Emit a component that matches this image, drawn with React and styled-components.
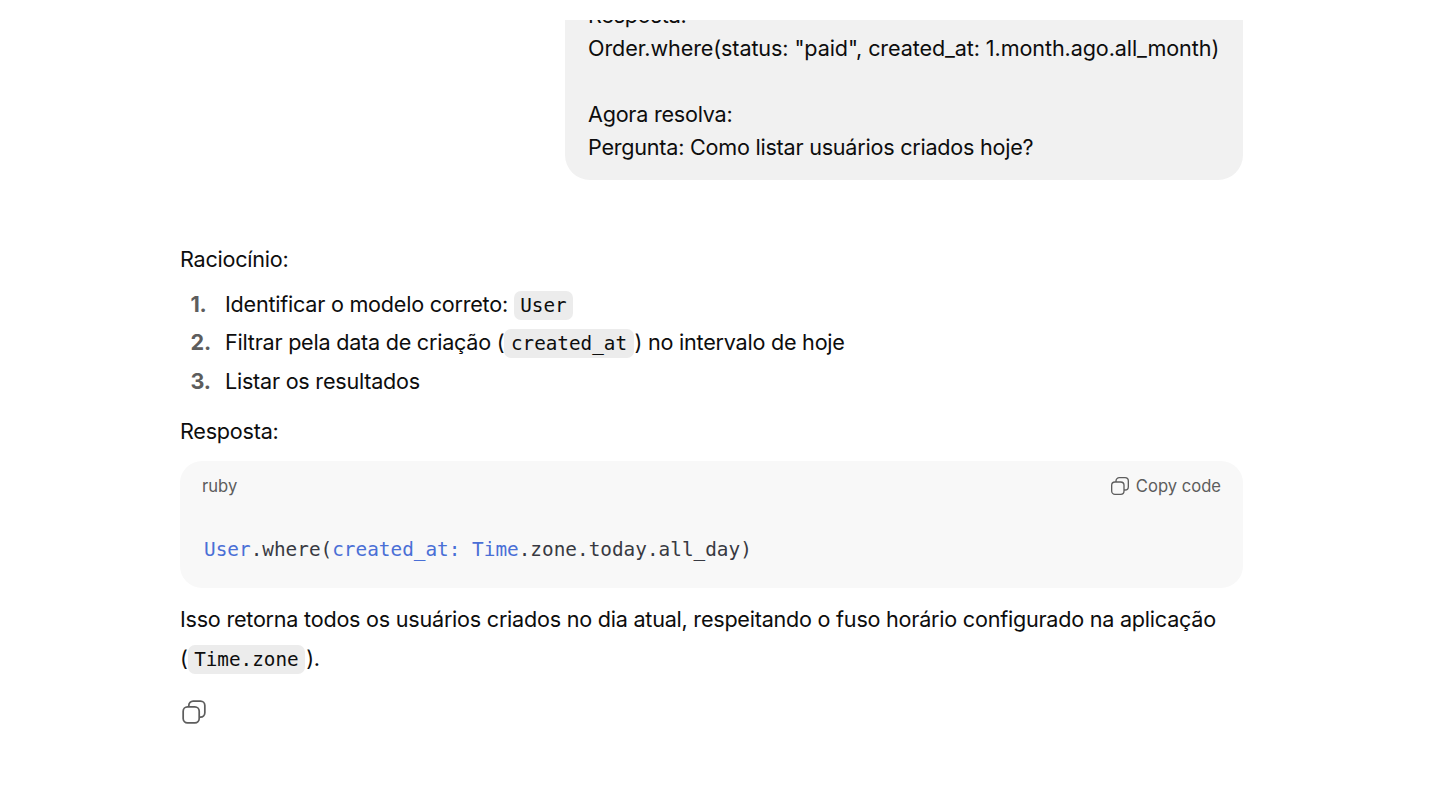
import React from 'react';
import styled, { createGlobalStyle } from 'styled-components';

const GlobalStyle = createGlobalStyle`
  html, body {
    margin: 0;
    padding: 0;
    background: #fff;
  }
  * {
    box-sizing: border-box;
  }
`;

const Page = styled.div`
  width: 1440px;
  height: 810px;
  overflow: hidden;
  display: flex;
  flex-direction: column;
  padding-top: 20px;
  font-family: Inter, 'Liberation Sans', sans-serif;
  font-size: 21.6px;
  letter-spacing: -0.24px;
  color: #0d0d0d;
`;

// chat is pinned to the bottom, older content is cut off under the top edge
const Thread = styled.main`
  flex: 1;
  min-height: 0;
  overflow: hidden;
  display: flex;
  flex-direction: column;
  justify-content: flex-end;
  width: 1063px;
  margin-left: 180px;
  padding-bottom: 85px;
`;

const UserBubble = styled.div`
  flex-shrink: 0;
  align-self: flex-end;
  width: 678px;
  padding: 0 23px 16px;
  margin-bottom: 63px;
  background: #f1f1f1;
  border-radius: 0 0 25px 25px;
  line-height: 33px;
  white-space: pre-line;
`;

const WideLine = styled.span`
  letter-spacing: -0.11px;
`;

const Text = styled.p`
  flex-shrink: 0;
  margin: 0 0 ${(p) => p.$after || 0}px;
  line-height: ${(p) => p.$lineHeight || 33}px;
`;

const Steps = styled.ol`
  flex-shrink: 0;
  list-style: none;
  counter-reset: step;
  margin: 0 0 15px;
  padding: 0;
`;

const Step = styled.li`
  counter-increment: step;
  display: flex;
  align-items: baseline;
  height: 38.5px;
  line-height: 38.5px;
  padding-left: 10.5px;

  &::before {
    content: counter(step) '.';
    width: 34.5px;
    flex-shrink: 0;
    font-weight: 700;
    color: #5d5d5d;
  }
`;

const StepText = styled.span`
  white-space: pre;
`;

const Chip = styled.code`
  display: inline-block;
  height: 29px;
  line-height: 29px;
  padding: 0 6.5px;
  margin: 0 1px 0 0;
  border-radius: 7px;
  background: #ececec;
  font-family: 'DejaVu Sans Mono', monospace;
  font-size: 19.3px;
  letter-spacing: 0;
  vertical-align: baseline;
`;

const CodeBlock = styled.section`
  flex-shrink: 0;
  height: 127px;
  margin-bottom: 12px;
  border-radius: 22px;
  background: #f8f8f8;
`;

const CodeHeader = styled.div`
  display: flex;
  align-items: center;
  justify-content: space-between;
  height: 50px;
  padding: 0 22px;
  font-size: 16.6px;
  letter-spacing: 0;
  color: #5d5d5d;
`;

const CopyButton = styled.button`
  display: flex;
  align-items: center;
  gap: 6px;
  padding: 0;
  border: 0;
  background: none;
  font: inherit;
  color: inherit;
`;

const CodeLine = styled.pre`
  margin: 0;
  padding: 25px 24px 0;
  line-height: 28px;
  font-family: 'DejaVu Sans Mono', monospace;
  font-size: 19.37px;
  letter-spacing: 0;
  color: #383a42;
`;

const Blue = styled.span`
  color: #4a6fd6;
`;

const ActionRow = styled.div`
  flex-shrink: 0;
  display: flex;
  margin-top: 21px;
  padding-left: 1px;
  height: 26px;
  color: #5d5d5d;
`;

function CopyIcon({ size }) {
  return (
    <svg width={size} height={size} viewBox="0 0 24 24" fill="none" stroke="currentColor" strokeWidth="1.6" strokeLinejoin="round">
      <rect x="2" y="7.2" width="14.8" height="14.8" rx="4" />
      <path d="M7.2 7.2V6a4 4 0 0 1 4-4H18a4 4 0 0 1 4 4v6.8a4 4 0 0 1-4 4h-1.2" />
    </svg>
  );
}

export default function App() {
  return (
    <>
      <GlobalStyle />
      <Page>
        <Thread>
          <UserBubble>
            Resposta:
            {'\n'}
            <WideLine>Order.where(status: "paid", created_at: 1.month.ago.all_month)</WideLine>
            {'\n\n'}
            Agora resolva:
            {'\n'}
            Pergunta: Como listar usuários criados hoje?
          </UserBubble>

          <Text $after={9}>Raciocínio:</Text>
          <Steps>
            <Step>
              <StepText>Identificar o modelo correto: <Chip>User</Chip></StepText>
            </Step>
            <Step>
              <StepText>Filtrar pela data de criação (<Chip>created_at</Chip>) no intervalo de hoje</StepText>
            </Step>
            <Step>
              <StepText>Listar os resultados</StepText>
            </Step>
          </Steps>
          <Text $after={13}>Resposta:</Text>

          <CodeBlock>
            <CodeHeader>
              <span>ruby</span>
              <CopyButton>
                <CopyIcon size={20} />
                Copy code
              </CopyButton>
            </CodeHeader>
            <CodeLine>
              <Blue>User</Blue>.where(<Blue>created_at:</Blue> <Blue>Time</Blue>.zone.today.all_day)
            </CodeLine>
          </CodeBlock>

          <Text $lineHeight={39}>
            Isso retorna todos os usuários criados no dia atual, respeitando o fuso horário configurado na aplicação
            <br />
            (<Chip>Time.zone</Chip>).
          </Text>

          <ActionRow>
            <CopyIcon size={26} />
          </ActionRow>
        </Thread>
      </Page>
    </>
  );
}
